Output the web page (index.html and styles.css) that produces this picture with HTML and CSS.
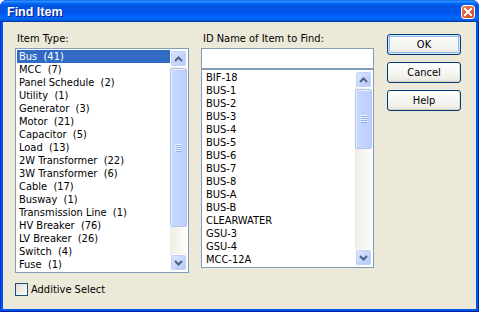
FILE: index.html
```html
<!DOCTYPE html>
<html>
<head>
<meta charset="utf-8">
<title>Find Item</title>
<link rel="stylesheet" href="styles.css">
</head>
<body>
<div class="window">
  <div class="titlebar">
    <span class="title">Find Item</span>
    <span class="close"><svg width="12" height="12" viewBox="0 0 12 12"><path d="M3 3 L9 9 M9 3 L3 9" stroke="#fff" stroke-width="2" stroke-linecap="square"/></svg></span>
  </div>
  <div class="client">
    <div class="col col-left">
      <div class="label">Item Type:</div>
      <div class="listbox lb-type">
        <ul class="items">
          <li class="sel">Bus  (41)</li>
          <li>MCC  (7)</li>
          <li>Panel Schedule  (2)</li>
          <li>Utility  (1)</li>
          <li>Generator  (3)</li>
          <li>Motor  (21)</li>
          <li>Capacitor  (5)</li>
          <li>Load  (13)</li>
          <li>2W Transformer  (22)</li>
          <li>3W Transformer  (6)</li>
          <li>Cable  (17)</li>
          <li>Busway  (1)</li>
          <li>Transmission Line  (1)</li>
          <li>HV Breaker  (76)</li>
          <li>LV Breaker  (26)</li>
          <li>Switch  (4)</li>
          <li>Fuse  (1)</li>
        </ul>
        <div class="scrollbar">
          <div class="sb-btn"><svg width="9" height="6" viewBox="0 0 9 6"><path d="M1 5 L4.5 1.5 L8 5" fill="none" stroke="#4D6185" stroke-width="2"/></svg></div>
          <div class="thumb thumb-type"><svg width="7" height="8" viewBox="0 0 7 8"><rect x="0" y="0" width="7" height="1" fill="#EEF4FE"/><rect x="1" y="1" width="6" height="1" fill="#8CB0F8"/><rect x="0" y="2" width="7" height="1" fill="#EEF4FE"/><rect x="1" y="3" width="6" height="1" fill="#8CB0F8"/><rect x="0" y="4" width="7" height="1" fill="#EEF4FE"/><rect x="1" y="5" width="6" height="1" fill="#8CB0F8"/><rect x="0" y="6" width="7" height="1" fill="#EEF4FE"/><rect x="1" y="7" width="6" height="1" fill="#8CB0F8"/></svg></div>
          <div class="track"></div>
          <div class="sb-btn"><svg width="9" height="6" viewBox="0 0 9 6"><path d="M1 1 L4.5 4.5 L8 1" fill="none" stroke="#4D6185" stroke-width="2"/></svg></div>
        </div>
      </div>
      <div class="check"><span class="box"></span><span class="check-label">Additive Select</span></div>
    </div>
    <div class="col col-right">
      <div class="label">ID Name of Item to Find:</div>
      <div class="input"></div>
      <div class="listbox lb-id">
        <ul class="items">
          <li>BIF-18</li>
          <li>BUS-1</li>
          <li>BUS-2</li>
          <li>BUS-3</li>
          <li>BUS-4</li>
          <li>BUS-5</li>
          <li>BUS-6</li>
          <li>BUS-7</li>
          <li>BUS-8</li>
          <li>BUS-A</li>
          <li>BUS-B</li>
          <li>CLEARWATER</li>
          <li>GSU-3</li>
          <li>GSU-4</li>
          <li>MCC-12A</li>
        </ul>
        <div class="scrollbar">
          <div class="sb-btn"><svg width="9" height="6" viewBox="0 0 9 6"><path d="M1 5 L4.5 1.5 L8 5" fill="none" stroke="#4D6185" stroke-width="2"/></svg></div>
          <div class="thumb thumb-id"><svg width="7" height="8" viewBox="0 0 7 8"><rect x="0" y="0" width="7" height="1" fill="#EEF4FE"/><rect x="1" y="1" width="6" height="1" fill="#8CB0F8"/><rect x="0" y="2" width="7" height="1" fill="#EEF4FE"/><rect x="1" y="3" width="6" height="1" fill="#8CB0F8"/><rect x="0" y="4" width="7" height="1" fill="#EEF4FE"/><rect x="1" y="5" width="6" height="1" fill="#8CB0F8"/><rect x="0" y="6" width="7" height="1" fill="#EEF4FE"/><rect x="1" y="7" width="6" height="1" fill="#8CB0F8"/></svg></div>
          <div class="track"></div>
          <div class="sb-btn"><svg width="9" height="6" viewBox="0 0 9 6"><path d="M1 1 L4.5 4.5 L8 1" fill="none" stroke="#4D6185" stroke-width="2"/></svg></div>
        </div>
      </div>
    </div>
    <div class="buttons">
      <div class="btn btn-default">OK</div>
      <div class="btn">Cancel</div>
      <div class="btn">Help</div>
    </div>
  </div>
</div>
</body>
</html>
```

FILE: styles.css
```css
html, body {
  margin: 0;
  padding: 0;
  background: #ffffff;
}

.window {
  width: 479px;
  height: 312px;
  box-sizing: border-box;
  display: flex;
  flex-direction: column;
  background: #0055EA;
  border-radius: 7px 7px 0 0;
  box-shadow: inset 1px 0 #0831D9, inset -1px 0 #001EA0, inset 0 -1px #001EA0;
  font-family: "DejaVu Sans Condensed", "DejaVu Sans", sans-serif;
  font-stretch: condensed;
  font-size: 11px;
  color: #000;
  overflow: hidden;
}

.titlebar {
  height: 22px;
  flex: none;
  display: flex;
  align-items: center;
  justify-content: space-between;
  padding: 0 4px 0 7px;
  border-radius: 7px 7px 0 0;
  background: linear-gradient(to bottom, #0058EE 0%, #3593FF 5%, #288EFF 8%, #127DFF 11%, #036FFC 14%, #0262EE 18%, #0057E5 25%, #0054E3 30%, #0055EB 58%, #005BF5 68%, #026AFE 78%, #0062EF 88%, #0052D6 94%, #0040AB 97%, #003092 100%);
}

.title {
  font-family: "Liberation Sans", Arial, sans-serif;
  font-stretch: normal;
  font-weight: bold;
  font-size: 12.5px;
  color: #ffffff;
  text-shadow: 1px 1px #0F1089;
  padding-top: 2px;
}

.close {
  width: 14px;
  height: 14px;
  box-sizing: border-box;
  border: 1px solid #ffffff;
  border-radius: 3px;
  background: radial-gradient(circle at 70% 75%, #CC4622 0%, #E0623C 55%, #EE8A66 100%);
  display: flex;
  align-items: center;
  justify-content: center;
  margin-top: 1px;
}

.client {
  flex: 1;
  margin: 0 3px 3px 3px;
  background: #ECE9D8;
  display: flex;
  padding: 10px 0 0 12px;
  box-sizing: border-box;
}

.col-left {
  width: 174px;
  margin-right: 12px;
}

.col-right {
  width: 173px;
  margin-right: 13px;
}

.label {
  height: 13px;
  line-height: 13px;
  margin-bottom: 3px;
  padding-left: 2px;
}

.listbox {
  display: flex;
  box-sizing: border-box;
  border: 1px solid #7F9DB9;
  background: #ffffff;
  padding: 1px;
}

.lb-type {
  height: 225px;
}

.lb-id {
  height: 199px;
}

.items {
  flex: 1;
  list-style: none;
  margin: 0;
  padding: 0;
  overflow: hidden;
}

.items li {
  height: 13px;
  line-height: 13px;
  padding-left: 2px;
  white-space: pre;
}

.items li.sel {
  background: #316AC5;
  color: #ffffff;
}

.lb-id .items li {
  padding-left: 3px;
}

.scrollbar {
  width: 17px;
  flex: none;
  display: flex;
  flex-direction: column;
  background: linear-gradient(to right, #EEEDE5, #FDFDFA);
}

.sb-btn {
  width: 17px;
  height: 17px;
  flex: none;
  box-sizing: border-box;
  border: 1px solid #ffffff;
  border-radius: 3px;
  background: linear-gradient(135deg, #DDE8FE 0%, #C7D7FC 50%, #B4C8F6 100%);
  box-shadow: inset 0 0 0 1px #C0D0F8;
  display: flex;
  align-items: center;
  justify-content: center;
}

.thumb {
  flex: none;
  box-sizing: border-box;
  border: 1px solid #B0C3F1;
  border-radius: 2px;
  margin: 1px 0 0 0;
  background: linear-gradient(to right, #C9D8FC 0%, #C3D4FD 40%, #BDCFFB 100%);
  box-shadow: inset 1px 1px 0 #E6EEFE;
  display: flex;
  align-items: center;
  justify-content: center;
}

.thumb-type {
  height: 159px;
}

.thumb-id {
  height: 60px;
}

.track {
  flex: 1;
}

.check {
  display: flex;
  align-items: center;
  height: 13px;
  margin-top: 10px;
}

.box {
  width: 13px;
  height: 13px;
  box-sizing: border-box;
  border: 1px solid #1C5180;
  background: linear-gradient(135deg, #DCDCD7 0%, #F0F0EC 60%, #FFFFFF 100%);
}

.check-label {
  margin-left: 3px;
  line-height: 13px;
}

.input {
  height: 21px;
  box-sizing: border-box;
  border: 1px solid #7F9DB9;
  background: #ffffff;
}

.buttons {
  width: 74px;
  margin-top: 2px;
  display: flex;
  flex-direction: column;
  gap: 7px;
}

.btn {
  height: 21px;
  box-sizing: border-box;
  border: 1px solid #003C74;
  border-radius: 3px;
  background: linear-gradient(to bottom, #FFFFFF 0%, #F7F7F4 40%, #F0F0EA 80%, #E5E2D8 100%);
  box-shadow: inset 0 -1px 0 #D6D0C5, inset -1px 0 0 #E3E0D6;
  display: flex;
  align-items: center;
  justify-content: center;
  line-height: 13px;
}

.btn-default {
  box-shadow: inset 0 0 0 1px #CEE7FF, inset 0 0 0 2px #98B8EA;
}
```
